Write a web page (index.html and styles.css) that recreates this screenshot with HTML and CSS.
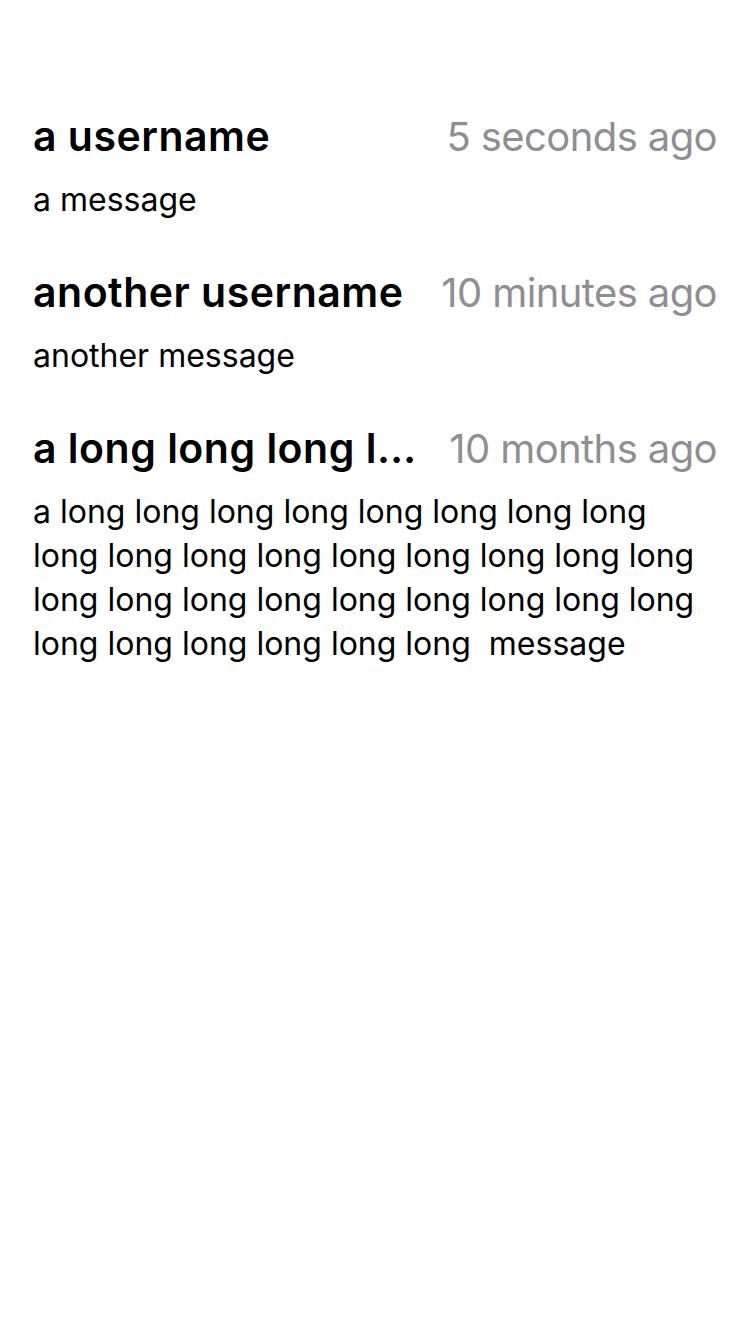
FILE: index.html
```html
<!DOCTYPE html>
<html lang="en">
<head>
<meta charset="utf-8">
<title>Messages</title>
<link rel="stylesheet" href="styles.css">
</head>
<body>
<ul class="list">
  <li class="item">
    <div class="head">
      <span class="user">a username</span>
      <span class="time">5 seconds ago</span>
    </div>
    <p class="msg">a message</p>
  </li>
  <li class="item">
    <div class="head">
      <span class="user">another username</span>
      <span class="time">10 minutes ago</span>
    </div>
    <p class="msg">another message</p>
  </li>
  <li class="item">
    <div class="head">
      <span class="user">a long long long long long long long long username</span>
      <span class="time">10 months ago</span>
    </div>
    <p class="msg">a long long long long long long long long long long long long long long long long long long long long long long long long long long long long long long long long&nbsp; message</p>
  </li>
</ul>
</body>
</html>
```

FILE: styles.css
```css
* { box-sizing: border-box; }
html, body {
  margin: 0;
  padding: 0;
  background: #ffffff;
}
body {
  font-family: Inter, "Noto Sans", sans-serif;
  color: #000000;
  width: 750px;
  min-height: 1334px;
}
.list {
  list-style: none;
  margin: 0;
  padding: 112px 33px 0 33px;
  display: flex;
  flex-direction: column;
  gap: 46px;
}
.item {
  display: flex;
  flex-direction: column;
  gap: 17px;
}
.head {
  display: flex;
  align-items: baseline;
  justify-content: space-between;
  gap: 30px;
  line-height: 48px;
}
.user {
  font-size: 41px;
  font-weight: 600;
  letter-spacing: 0.5px;
  white-space: nowrap;
  overflow: hidden;
  text-overflow: ellipsis;
  min-width: 0;
}
.time {
  font-size: 40px;
  font-weight: 400;
  color: #8e8e93;
  letter-spacing: -0.6px;
  white-space: nowrap;
  flex-shrink: 0;
}
.msg {
  margin: 0;
  font-size: 32px;
  line-height: 44px;
  letter-spacing: 0;
}
```
